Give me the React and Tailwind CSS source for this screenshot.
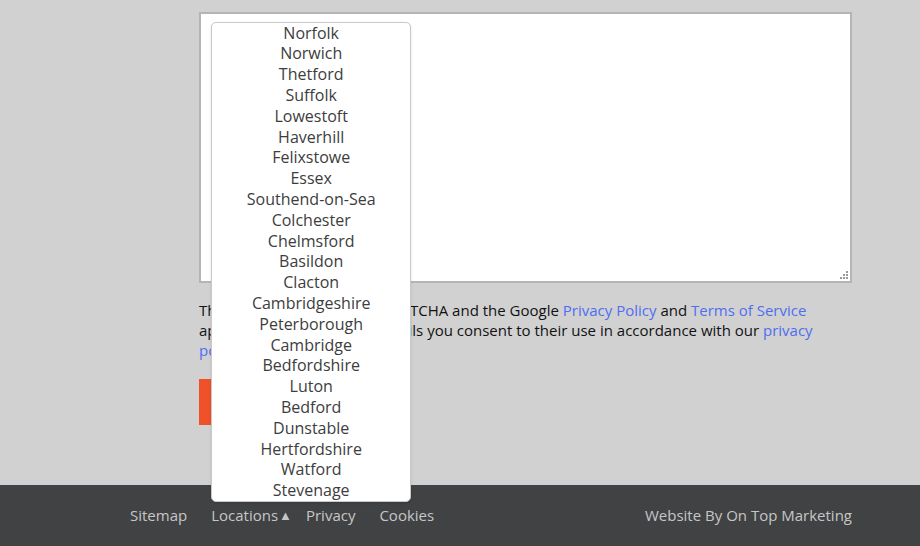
import React from 'react';

const locations = [
  'Norfolk', 'Norwich', 'Thetford', 'Suffolk', 'Lowestoft', 'Haverhill', 'Felixstowe',
  'Essex', 'Southend-on-Sea', 'Colchester', 'Chelmsford', 'Basildon', 'Clacton',
  'Cambridgeshire', 'Peterborough', 'Cambridge', 'Bedfordshire', 'Luton', 'Bedford',
  'Dunstable', 'Hertfordshire', 'Watford', 'Stevenage',
];

const LocationsMenu = () => (
  <div className="absolute left-0 bottom-[23px] w-[200px] bg-white border border-[#c9c9c9] rounded-[5px] shadow-sm z-10">
    <ul className="text-[16px] leading-[20.8px] text-[#3d3d3d] text-center">
      {locations.map((loc) => (
        <li key={loc} className="cursor-pointer hover:text-[#f05128]">{loc}</li>
      ))}
    </ul>
  </div>
);

// dotted resize grip like the one in the corner of the message box
const Grip = () => (
  <svg className="absolute right-[3px] bottom-[3px]" width="9" height="9" viewBox="0 0 9 9">
    <rect x="6" y="0" width="2" height="2" fill="#9a9a9a" />
    <rect x="3" y="3" width="2" height="2" fill="#9a9a9a" />
    <rect x="6" y="3" width="2" height="2" fill="#9a9a9a" />
    <rect x="0" y="6" width="2" height="2" fill="#9a9a9a" />
    <rect x="3" y="6" width="2" height="2" fill="#9a9a9a" />
    <rect x="6" y="6" width="2" height="2" fill="#9a9a9a" />
  </svg>
);

const App = () => {
  return (
    <div className="w-[920px] h-[546px] flex flex-col bg-[#d1d1d1] font-['Open_Sans',sans-serif] overflow-hidden">
      <div className="flex-1 pt-[12px] pl-[199px]">
        <div className="w-[653px]">
          <div className="relative">
            <textarea className="block w-full h-[271px] bg-white border-2 border-[#b5b5b5] outline-none p-2 text-[15px] resize-none" />
            <Grip />
          </div>
          <p className="mt-[17px] text-[15px] leading-[20px] text-[#111]">
            This site is protected by reCAPTCHA and the Google{' '}
            <a href="#" className="text-[#4f6ef0]">Privacy Policy</a> and{' '}
            <a href="#" className="text-[#4f6ef0]">Terms of Service</a> apply. By opting in to our emails you consent to their use in accordance with our{' '}
            <a href="#" className="text-[#4f6ef0]">privacy policy</a>.
          </p>
          <button className="mt-[19px] h-[46px] w-[120px] bg-[#f05128] text-white text-[16px] font-semibold">
            Submit
          </button>
        </div>
      </div>
      <footer className="h-[61px] bg-[#414244] text-[15px] text-[#c6c6c6]">
        <div className="ml-[130px] w-[722px] flex items-center justify-between pt-[20px] leading-[20px]">
          <nav className="flex items-center gap-6">
            <a href="#">Sitemap</a>
            <div className="relative flex items-center -mr-[10px]">
              <a href="#">Locations</a>
              <span className="ml-[1px] text-[13px] leading-none">▲</span>
              <LocationsMenu />
            </div>
            <a href="#">Privacy</a>
            <a href="#">Cookies</a>
          </nav>
          <span>Website By On Top Marketing</span>
        </div>
      </footer>
    </div>
  );
};

export default App;
